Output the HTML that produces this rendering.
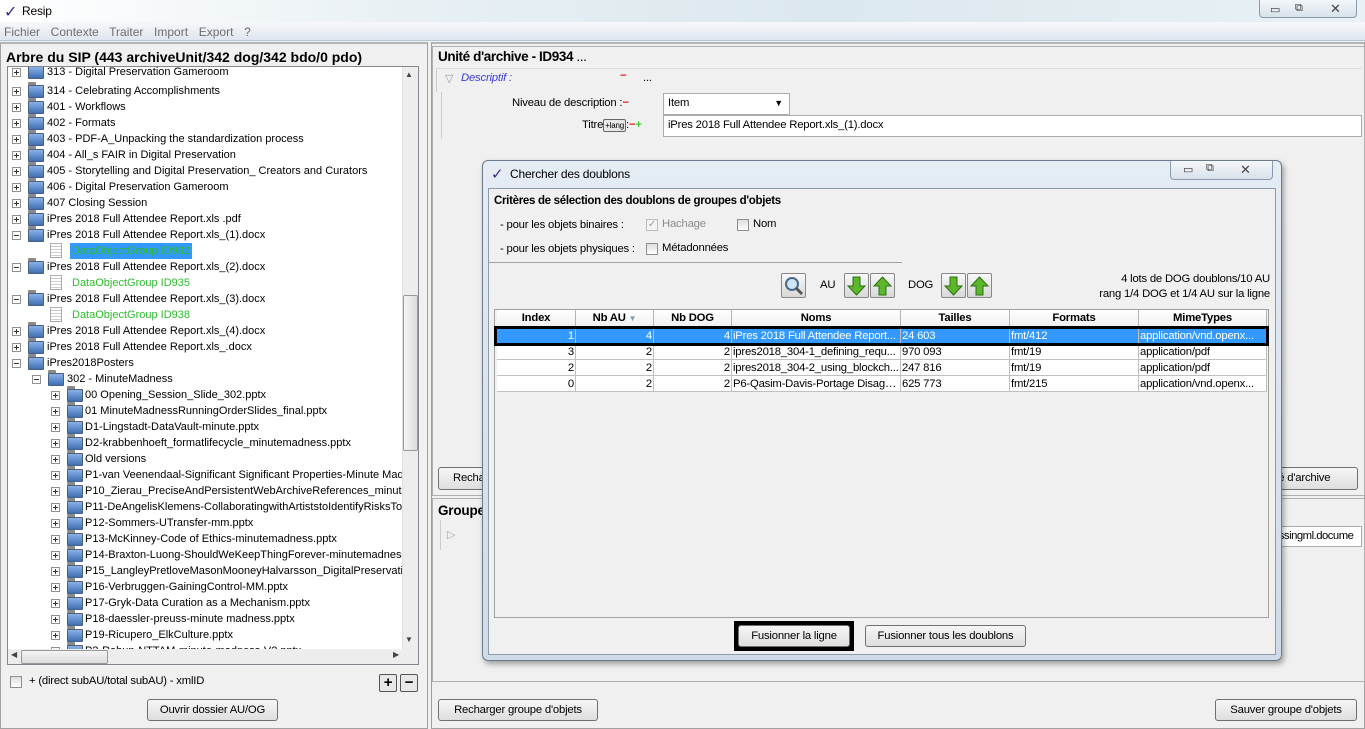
<!DOCTYPE html>
<html><head><meta charset="utf-8">
<style>
*{box-sizing:border-box;margin:0;padding:0}
body{width:1365px;height:729px;overflow:hidden;background:#f0f0f0;font-family:"Liberation Sans",sans-serif;font-size:11.3px;letter-spacing:-0.2px;color:#000;position:relative}
.a{position:absolute;white-space:nowrap}
.btn{position:absolute;border:1px solid #707070;border-radius:3px;background:linear-gradient(#f6f6f6,#dedede);text-align:center;font-size:11.3px;line-height:20px}
.tr{position:absolute;height:16px;font-family:"Liberation Sans",sans-serif;font-size:11px;letter-spacing:0;line-height:16px;white-space:nowrap}
.ex{position:absolute;width:9px;height:9px;border:1px solid #919191;background:#fff;top:4px}
.ex:before{content:"";position:absolute;left:1px;top:3px;width:5px;height:1px;background:#333}
.ex.p:after{content:"";position:absolute;left:3px;top:1px;width:1px;height:5px;background:#333}
.fd{position:absolute;top:2px;width:16px;height:13px;background:linear-gradient(#8ab2e6,#3d6fb8);border:1px solid #4a5f7a;border-radius:1px}
.fd:before{content:"";position:absolute;left:-1px;top:-4px;width:8px;height:3px;background:#8a8a8a;border-radius:1px 1px 0 0}
.dc{position:absolute;top:0;width:12px;height:15px;border:1px solid #aaa;background:repeating-linear-gradient(#fff 0 2px,#ccc 2px 3px)}
.hd{position:absolute;top:310px;height:17px;border-right:1px solid #b5b5b5;border-bottom:1px solid #b5b5b5;text-align:center;font-weight:bold;line-height:16px;background:linear-gradient(#fff,#f0f0f0)}
.c{position:absolute;height:16px;border-right:1px solid #c0c0c0;border-bottom:1px solid #c0c0c0;line-height:16px;padding:0 1px;overflow:hidden;white-space:nowrap;text-overflow:ellipsis}
.r{text-align:right}
</style></head><body>
<div class="a" style="left:0;top:0;width:1365px;height:22px;background:linear-gradient(90deg,#fff,#e8f0f4 30%,#dbe8ee 60%,#e9f1f5)"></div>
<div class="a" style="left:4px;top:2px;font-size:16px;color:#3a2c8c">✓</div>
<div class="a" style="left:22px;top:4px;font-size:12px">Resip</div>
<div class="a" style="left:1259px;top:0;width:98px;height:18px;border:1px solid #8a9aab;border-top:none;border-radius:0 0 4px 4px;background:linear-gradient(#f4f7fa,#d8e1ea)"></div>
<div class="a" style="left:1270px;top:3px;font-size:11px;color:#333">▭</div>
<div class="a" style="left:1295px;top:2px;font-size:11px;color:#333">⧉</div>
<div class="a" style="left:1330px;top:1px;font-size:13px;color:#444">✕</div>
<div class="a" style="left:0;top:22px;width:1365px;height:19px;background:linear-gradient(#f6f8fb,#dfe6ef);border-bottom:1px solid #b9c3ce"></div>
<div class="a" style="left:4px;top:25px;font-size:12px;letter-spacing:0;color:#6d6d6d;word-spacing:2px">Fichier&nbsp; Contexte&nbsp; Traiter&nbsp; Import&nbsp; Export&nbsp; ?</div>
<div class="a" style="left:0;top:42px;width:428px;height:687px;border:1px solid #a0a0a0;border-top:2px solid #b4b4b4"></div>
<div class="a" style="left:6px;top:49px;font-weight:bold;font-size:14px;letter-spacing:0">Arbre du SIP (443 archiveUnit/342 dog/342 bdo/0 pdo)</div>
<div class="a" style="left:7px;top:66px;width:412px;height:599px;border:1px solid #828790;background:#fff;overflow:hidden">
<div style="position:absolute;left:0;top:0;width:395px;height:582px;overflow:hidden">
<div class="tr" style="top:-3px;left:0"><span class="ex p" style="left:4px"></span><span class="fd" style="left:20px"></span><span style="position:absolute;left:39px">313 - Digital Preservation Gameroom</span></div>
<div class="tr" style="top:16px;left:0"><span class="ex p" style="left:4px"></span><span class="fd" style="left:20px"></span><span style="position:absolute;left:39px">314 - Celebrating Accomplishments</span></div>
<div class="tr" style="top:32px;left:0"><span class="ex p" style="left:4px"></span><span class="fd" style="left:20px"></span><span style="position:absolute;left:39px">401 - Workflows</span></div>
<div class="tr" style="top:48px;left:0"><span class="ex p" style="left:4px"></span><span class="fd" style="left:20px"></span><span style="position:absolute;left:39px">402 - Formats</span></div>
<div class="tr" style="top:64px;left:0"><span class="ex p" style="left:4px"></span><span class="fd" style="left:20px"></span><span style="position:absolute;left:39px">403 - PDF-A_Unpacking the standardization process</span></div>
<div class="tr" style="top:80px;left:0"><span class="ex p" style="left:4px"></span><span class="fd" style="left:20px"></span><span style="position:absolute;left:39px">404 - All_s FAIR in Digital Preservation</span></div>
<div class="tr" style="top:96px;left:0"><span class="ex p" style="left:4px"></span><span class="fd" style="left:20px"></span><span style="position:absolute;left:39px">405 - Storytelling and Digital Preservation_ Creators and Curators</span></div>
<div class="tr" style="top:112px;left:0"><span class="ex p" style="left:4px"></span><span class="fd" style="left:20px"></span><span style="position:absolute;left:39px">406 - Digital Preservation Gameroom</span></div>
<div class="tr" style="top:128px;left:0"><span class="ex p" style="left:4px"></span><span class="fd" style="left:20px"></span><span style="position:absolute;left:39px">407 Closing Session</span></div>
<div class="tr" style="top:144px;left:0"><span class="ex p" style="left:4px"></span><span class="fd" style="left:20px"></span><span style="position:absolute;left:39px">iPres 2018 Full Attendee Report.xls .pdf</span></div>
<div class="tr" style="top:160px;left:0"><span class="ex" style="left:4px"></span><span class="fd" style="left:20px"></span><span style="position:absolute;left:39px">iPres 2018 Full Attendee Report.xls_(1).docx</span></div>
<div class="tr" style="top:176px;left:0"><span class="dc" style="left:42px"></span><span style="position:absolute;left:62px;padding:0 2px;background:#3399ff;color:#2dbb2d">DataObjectGroup ID932</span></div>
<div class="tr" style="top:192px;left:0"><span class="ex" style="left:4px"></span><span class="fd" style="left:20px"></span><span style="position:absolute;left:39px">iPres 2018 Full Attendee Report.xls_(2).docx</span></div>
<div class="tr" style="top:208px;left:0"><span class="dc" style="left:42px"></span><span style="position:absolute;left:64px;color:#2dbb2d">DataObjectGroup ID935</span></div>
<div class="tr" style="top:224px;left:0"><span class="ex" style="left:4px"></span><span class="fd" style="left:20px"></span><span style="position:absolute;left:39px">iPres 2018 Full Attendee Report.xls_(3).docx</span></div>
<div class="tr" style="top:240px;left:0"><span class="dc" style="left:42px"></span><span style="position:absolute;left:64px;color:#2dbb2d">DataObjectGroup ID938</span></div>
<div class="tr" style="top:256px;left:0"><span class="ex p" style="left:4px"></span><span class="fd" style="left:20px"></span><span style="position:absolute;left:39px">iPres 2018 Full Attendee Report.xls_(4).docx</span></div>
<div class="tr" style="top:272px;left:0"><span class="ex p" style="left:4px"></span><span class="fd" style="left:20px"></span><span style="position:absolute;left:39px">iPres 2018 Full Attendee Report.xls_.docx</span></div>
<div class="tr" style="top:288px;left:0"><span class="ex" style="left:4px"></span><span class="fd" style="left:20px"></span><span style="position:absolute;left:39px">iPres2018Posters</span></div>
<div class="tr" style="top:304px;left:0"><span class="ex" style="left:24px"></span><span class="fd" style="left:40px"></span><span style="position:absolute;left:59px">302 - MinuteMadness</span></div>
<div class="tr" style="top:320px;left:0"><span class="ex p" style="left:43px"></span><span class="fd" style="left:59px"></span><span style="position:absolute;left:77px">00 Opening_Session_Slide_302.pptx</span></div>
<div class="tr" style="top:336px;left:0"><span class="ex p" style="left:43px"></span><span class="fd" style="left:59px"></span><span style="position:absolute;left:77px">01 MinuteMadnessRunningOrderSlides_final.pptx</span></div>
<div class="tr" style="top:352px;left:0"><span class="ex p" style="left:43px"></span><span class="fd" style="left:59px"></span><span style="position:absolute;left:77px">D1-Lingstadt-DataVault-minute.pptx</span></div>
<div class="tr" style="top:368px;left:0"><span class="ex p" style="left:43px"></span><span class="fd" style="left:59px"></span><span style="position:absolute;left:77px">D2-krabbenhoeft_formatlifecycle_minutemadness.pptx</span></div>
<div class="tr" style="top:384px;left:0"><span class="ex p" style="left:43px"></span><span class="fd" style="left:59px"></span><span style="position:absolute;left:77px">Old versions</span></div>
<div class="tr" style="top:400px;left:0"><span class="ex p" style="left:43px"></span><span class="fd" style="left:59px"></span><span style="position:absolute;left:77px">P1-van Veenendaal-Significant Significant Properties-Minute Madness</span></div>
<div class="tr" style="top:416px;left:0"><span class="ex p" style="left:43px"></span><span class="fd" style="left:59px"></span><span style="position:absolute;left:77px">P10_Zierau_PreciseAndPersistentWebArchiveReferences_minuteMadness</span></div>
<div class="tr" style="top:432px;left:0"><span class="ex p" style="left:43px"></span><span class="fd" style="left:59px"></span><span style="position:absolute;left:77px">P11-DeAngelisKlemens-CollaboratingwithArtiststoIdentifyRisksToDigital</span></div>
<div class="tr" style="top:448px;left:0"><span class="ex p" style="left:43px"></span><span class="fd" style="left:59px"></span><span style="position:absolute;left:77px">P12-Sommers-UTransfer-mm.pptx</span></div>
<div class="tr" style="top:464px;left:0"><span class="ex p" style="left:43px"></span><span class="fd" style="left:59px"></span><span style="position:absolute;left:77px">P13-McKinney-Code of Ethics-minutemadness.pptx</span></div>
<div class="tr" style="top:480px;left:0"><span class="ex p" style="left:43px"></span><span class="fd" style="left:59px"></span><span style="position:absolute;left:77px">P14-Braxton-Luong-ShouldWeKeepThingForever-minutemadness-V2</span></div>
<div class="tr" style="top:496px;left:0"><span class="ex p" style="left:43px"></span><span class="fd" style="left:59px"></span><span style="position:absolute;left:77px">P15_LangleyPretloveMasonMooneyHalvarsson_DigitalPreservationTraining</span></div>
<div class="tr" style="top:512px;left:0"><span class="ex p" style="left:43px"></span><span class="fd" style="left:59px"></span><span style="position:absolute;left:77px">P16-Verbruggen-GainingControl-MM.pptx</span></div>
<div class="tr" style="top:528px;left:0"><span class="ex p" style="left:43px"></span><span class="fd" style="left:59px"></span><span style="position:absolute;left:77px">P17-Gryk-Data Curation as a Mechanism.pptx</span></div>
<div class="tr" style="top:544px;left:0"><span class="ex p" style="left:43px"></span><span class="fd" style="left:59px"></span><span style="position:absolute;left:77px">P18-daessler-preuss-minute madness.pptx</span></div>
<div class="tr" style="top:560px;left:0"><span class="ex p" style="left:43px"></span><span class="fd" style="left:59px"></span><span style="position:absolute;left:77px">P19-Ricupero_ElkCulture.pptx</span></div>
<div class="tr" style="top:576px;left:0"><span class="ex p" style="left:43px"></span><span class="fd" style="left:59px"></span><span style="position:absolute;left:77px">P2-Rabun-NTTAM-minute-madness-V2.pptx</span></div>
</div>
<div style="position:absolute;left:394px;top:0;width:17px;height:582px;background:#ededed;border-left:1px solid #e0e0e0"></div>
<div style="position:absolute;left:397px;top:3px;font-size:8px;color:#444">▲</div>
<div style="position:absolute;left:397px;top:568px;font-size:8px;color:#444">▼</div>
<div style="position:absolute;left:395px;top:228px;width:15px;height:156px;border:1px solid #999;border-radius:2px;background:linear-gradient(90deg,#f4f4f4,#dcdcdc)"></div>
<div style="position:absolute;left:0;top:582px;width:411px;height:16px;background:#ededed"></div>
<div style="position:absolute;left:3px;top:583px;font-size:8px;color:#444">◀</div>
<div style="position:absolute;left:385px;top:583px;font-size:8px;color:#444">▶</div>
<div style="position:absolute;left:13px;top:583px;width:87px;height:14px;border:1px solid #999;border-radius:2px;background:linear-gradient(#f4f4f4,#dcdcdc)"></div>
</div>
<div class="a" style="left:10px;top:676px;width:12px;height:12px;border:1px solid #8e8f8f;background:linear-gradient(#dedede,#fff)"></div>
<div class="a" style="left:29px;top:675px">+ (direct subAU/total subAU) - xmlID</div>
<div class="a" style="left:379px;top:674px;width:18px;height:18px;border:1px solid #555;border-radius:2px;background:#e8e8e8;font-weight:bold;font-size:15px;line-height:15px;text-align:center">+</div>
<div class="a" style="left:400px;top:674px;width:18px;height:18px;border:1px solid #555;border-radius:2px;background:#e8e8e8;font-weight:bold;font-size:15px;line-height:15px;text-align:center">−</div>
<div class="btn" style="left:147px;top:699px;width:131px;height:22px">Ouvrir dossier AU/OG</div>
<div class="a" style="left:431px;top:42px;width:934px;height:687px;border:1px solid #a0a0a0;border-top:2px solid #b4b4b4"></div>
<div class="a" style="left:432px;top:46px;width:933px;height:450px;border:1px solid #b0b0b0"></div>
<div class="a" style="left:438px;top:49px;font-weight:bold;font-size:13.5px;letter-spacing:-0.4px">Unité d'archive - ID934 <span style="font-weight:normal">...</span></div>
<div class="a" style="left:436px;top:68px;width:926px;height:24px;border-top:1px solid #ddd;border-left:1px solid #ccc"></div>
<div class="a" style="left:445px;top:72px;font-size:11px;color:#999">▽</div>
<div class="a" style="left:461px;top:72px;font-style:italic;color:#3b3bd4">Descriptif :</div>
<div class="a" style="left:620px;top:70px;color:#e02020;font-weight:bold">−</div>
<div class="a" style="left:643px;top:72px">...</div>
<div class="a" style="left:441px;top:92px;width:1px;height:46px;background:#ccc"></div>
<div class="a" style="left:512px;top:97px">Niveau de description :<span style="color:#e02020;font-weight:bold">−</span></div>
<div class="a" style="left:663px;top:93px;width:127px;height:22px;border:1px solid #aaa;background:#fff;padding:3px 4px">Item<span style="position:absolute;right:6px;top:4px;font-size:9px">▼</span></div>
<div class="a" style="left:582px;top:119px">Titre<span style="display:inline-block;border:1px solid #666;border-radius:2px;font-size:8px;padding:0 1px;line-height:11px;background:#e8e8e8">+lang</span>:<span style="color:#e02020;font-weight:bold">−</span><span style="color:#33cc33;font-weight:bold">+</span></div>
<div class="a" style="left:663px;top:115px;width:699px;height:22px;border:1px solid #aaa;background:#fff;padding:3px 4px">iPres 2018 Full Attendee Report.xls_(1).docx</div>
<div class="btn" style="left:438px;top:467px;width:60px;height:23px;text-align:left;padding-left:14px">Recha</div>
<div class="btn" style="left:1262px;top:467px;width:96px;height:23px;text-align:left;padding-left:10px">ité d'archive</div>
<div class="a" style="left:432px;top:498px;width:933px;height:184px;border:1px solid #b0b0b0"></div>
<div class="a" style="left:438px;top:503px;font-weight:bold;font-size:13.5px">Groupe</div>
<div class="a" style="left:440px;top:520px;width:1px;height:30px;background:#ccc"></div>
<div class="a" style="left:447px;top:528px;font-size:11px;color:#aaa">▷</div>
<div class="a" style="left:1270px;top:526px;width:92px;height:21px;border:1px solid #aaa;background:#fff;padding:3px 0 0 2px;overflow:hidden;letter-spacing:-0.5px">essingml.docume</div>
<div class="btn" style="left:438px;top:699px;width:160px;height:22px">Recharger groupe d'objets</div>
<div class="btn" style="left:1215px;top:699px;width:142px;height:22px">Sauver groupe d'objets</div>
<!-- dialog -->
<div class="a" style="left:482px;top:160px;width:800px;height:501px;border:1px solid #6b7b8c;border-radius:6px;background:linear-gradient(#e4ecf4,#cfdbe8);box-shadow:2px 3px 6px rgba(0,0,0,.35)"></div>
<div class="a" style="left:491px;top:165px;font-size:15px;color:#3a2c8c">✓</div>
<div class="a" style="left:510px;top:167px;font-size:12px">Chercher des doublons</div>
<div class="a" style="left:1170px;top:161px;width:103px;height:19px;border:1px solid #8a9aab;border-top:none;border-radius:0 0 4px 4px;background:linear-gradient(#f4f7fa,#d8e1ea)"></div>
<div class="a" style="left:1183px;top:163px;font-size:11px;color:#333">▭</div>
<div class="a" style="left:1206px;top:162px;font-size:11px;color:#333">⧉</div>
<div class="a" style="left:1240px;top:162px;font-size:13px;color:#444">✕</div>
<div class="a" style="left:488px;top:188px;width:788px;height:467px;background:#f0f0f0;border:1px solid #8e9aa8"></div>
<div class="a" style="left:494px;top:195px;font-weight:bold;font-size:11.5px;letter-spacing:-0.3px">Critères de sélection des doublons de groupes d'objets</div>
<div class="a" style="left:500px;top:219px">- pour les objets binaires :</div>
<div class="a" style="left:646px;top:219px;width:12px;height:12px;border:1px solid #bbb;background:#f4f4f4;font-size:10px;line-height:10px;color:#999;text-align:center">✓</div>
<div class="a" style="left:662px;top:218px;color:#8a8a8a">Hachage</div>
<div class="a" style="left:737px;top:219px;width:12px;height:12px;border:1px solid #8e8f8f;background:linear-gradient(#dedede,#fff)"></div>
<div class="a" style="left:753px;top:218px">Nom</div>
<div class="a" style="left:500px;top:243px">- pour les objets physiques :</div>
<div class="a" style="left:646px;top:243px;width:12px;height:12px;border:1px solid #8e8f8f;background:linear-gradient(#dedede,#fff)"></div>
<div class="a" style="left:662px;top:242px">Métadonnées</div>
<div class="a" style="left:489px;top:262px;width:413px;height:1px;background:#a0a0a0"></div>
<div class="a" style="left:781px;top:273px;width:25px;height:25px;border:1px solid #888;border-radius:2px;background:linear-gradient(#f8f8f8,#d8d8d8)"><svg width="23" height="23"><circle cx="10" cy="10" r="6" fill="#cfe4f7" stroke="#4a6a8a" stroke-width="2"/><path d="M14 14l6 6" stroke="#555" stroke-width="3"/></svg></div>
<div class="a" style="left:820px;top:279px">AU</div>
<div class="a" style="left:844px;top:273px;width:25px;height:25px;border:1px solid #888;border-radius:2px;background:linear-gradient(#f8f8f8,#d8d8d8)"><svg width="23" height="23"><path d="M8 3h7v9h5l-8.5 9L3 12h5z" fill="#5cb82a" stroke="#2c6e12"/></svg></div>
<div class="a" style="left:870px;top:273px;width:25px;height:25px;border:1px solid #888;border-radius:2px;background:linear-gradient(#f8f8f8,#d8d8d8)"><svg width="23" height="23"><path d="M8 21h7v-9h5L11.5 3 3 12h5z" fill="#5cb82a" stroke="#2c6e12"/></svg></div>
<div class="a" style="left:908px;top:279px">DOG</div>
<div class="a" style="left:941px;top:273px;width:25px;height:25px;border:1px solid #888;border-radius:2px;background:linear-gradient(#f8f8f8,#d8d8d8)"><svg width="23" height="23"><path d="M8 3h7v9h5l-8.5 9L3 12h5z" fill="#5cb82a" stroke="#2c6e12"/></svg></div>
<div class="a" style="left:967px;top:273px;width:25px;height:25px;border:1px solid #888;border-radius:2px;background:linear-gradient(#f8f8f8,#d8d8d8)"><svg width="23" height="23"><path d="M8 21h7v-9h5L11.5 3 3 12h5z" fill="#5cb82a" stroke="#2c6e12"/></svg></div>
<div class="a" style="left:1000px;top:272px;width:270px;text-align:right;line-height:15px">4 lots de DOG doublons/10 AU<br>rang 1/4 DOG et 1/4 AU sur la ligne</div>
<div class="a" style="left:494px;top:309px;width:775px;height:309px;border:1px solid #a0a0a0;background:#f0f0f0"></div>
<div class="hd" style="left:497px;width:79px">Index</div>
<div class="hd" style="left:576px;width:78px">Nb AU <span style="color:#7a9ac0;font-size:8px">▼</span></div>
<div class="hd" style="left:654px;width:78px">Nb DOG</div>
<div class="hd" style="left:732px;width:169px">Noms</div>
<div class="hd" style="left:901px;width:109px">Tailles</div>
<div class="hd" style="left:1010px;width:129px">Formats</div>
<div class="hd" style="left:1139px;width:128px">MimeTypes</div>
<div class="a" style="left:497px;top:328px;width:770px;height:16px;background:#3399ff"></div>
<div class="c r" style="left:497px;top:328px;width:79px;color:#fff">1</div><div class="c r" style="left:576px;top:328px;width:78px;color:#fff">4</div><div class="c r" style="left:654px;top:328px;width:78px;color:#fff">4</div><div class="c" style="left:732px;top:328px;width:169px;color:#fff">iPres 2018 Full Attendee Report...</div><div class="c" style="left:901px;top:328px;width:109px;color:#fff">24 603</div><div class="c" style="left:1010px;top:328px;width:129px;color:#fff">fmt/412</div><div class="c" style="left:1139px;top:328px;width:128px;color:#fff">application/vnd.openx...</div>
<div class="c r" style="left:497px;top:344px;width:79px;background:#fff">3</div><div class="c r" style="left:576px;top:344px;width:78px;background:#fff">2</div><div class="c r" style="left:654px;top:344px;width:78px;background:#fff">2</div><div class="c" style="left:732px;top:344px;width:169px;background:#fff">ipres2018_304-1_defining_requ...</div><div class="c" style="left:901px;top:344px;width:109px;background:#fff">970 093</div><div class="c" style="left:1010px;top:344px;width:129px;background:#fff">fmt/19</div><div class="c" style="left:1139px;top:344px;width:128px;background:#fff">application/pdf</div>
<div class="c r" style="left:497px;top:360px;width:79px;background:#fff">2</div><div class="c r" style="left:576px;top:360px;width:78px;background:#fff">2</div><div class="c r" style="left:654px;top:360px;width:78px;background:#fff">2</div><div class="c" style="left:732px;top:360px;width:169px;background:#fff">ipres2018_304-2_using_blockch...</div><div class="c" style="left:901px;top:360px;width:109px;background:#fff">247 816</div><div class="c" style="left:1010px;top:360px;width:129px;background:#fff">fmt/19</div><div class="c" style="left:1139px;top:360px;width:128px;background:#fff">application/pdf</div>
<div class="c r" style="left:497px;top:376px;width:79px;background:#fff">0</div><div class="c r" style="left:576px;top:376px;width:78px;background:#fff">2</div><div class="c r" style="left:654px;top:376px;width:78px;background:#fff">2</div><div class="c" style="left:732px;top:376px;width:169px;background:#fff">P6-Qasim-Davis-Portage Disagg...</div><div class="c" style="left:901px;top:376px;width:109px;background:#fff">625 773</div><div class="c" style="left:1010px;top:376px;width:129px;background:#fff">fmt/215</div><div class="c" style="left:1139px;top:376px;width:128px;background:#fff">application/vnd.openx...</div>
<div class="a" style="left:494px;top:326px;width:775px;height:20px;border:3px solid #000"></div>
<div class="a" style="left:734px;top:621px;width:120px;height:30px;background:#000"></div>
<div class="btn" style="left:738px;top:625px;width:112px;height:22px">Fusionner la ligne</div>
<div class="btn" style="left:865px;top:625px;width:161px;height:22px">Fusionner tous les doublons</div>
</body></html>
